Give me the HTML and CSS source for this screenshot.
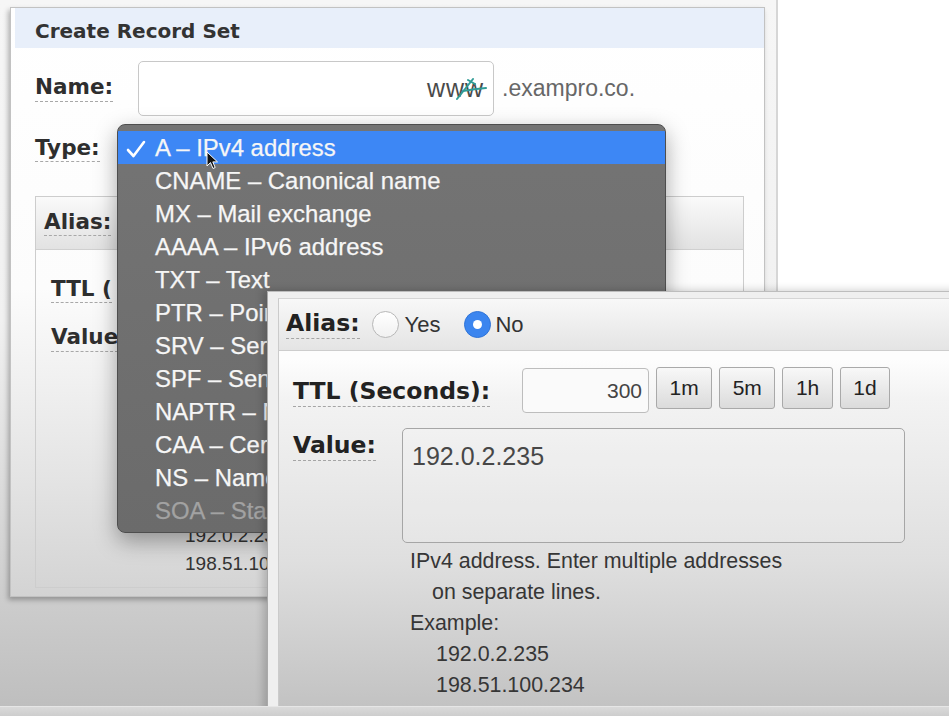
FILE: index.html
```html
<!DOCTYPE html>
<html lang="en">
<head>
<meta charset="utf-8">
<title>Create Record Set</title>
<link rel="stylesheet" href="styles.css">
</head>
<body>
<div class="stage">
  <div class="backdrop">
    <section class="window">
      <header class="win-head">Create Record Set</header>
      <div class="win-body">
        <div class="name-row">
          <span class="lbl">Name:</span>
          <div class="name-input">
            <span class="www">www</span>
            <svg class="scribble" width="34" height="26" viewBox="0 0 34 26"><path d="M1 22 L17 2" /><path d="M7 14 Q18 12 30 11" /><path d="M12 3 L19 7" /></svg>
          </div>
          <span class="domain">.exampro.co.</span>
        </div>
        <div class="type-row"><span class="lbl">Type:</span></div>
        <div class="alias-box">
          <div class="alias-head"><span class="lbl">Alias:</span></div>
          <div class="alias-body">
            <div class="b-ttl"><span class="lbl">TTL (</span></div>
            <div class="b-value">
              <div class="b-vcell"><span class="lbl">Value</span></div>
              <div class="b-field">
                <div class="b-help">
                  <p class="ex">192.0.2.235</p>
                  <p class="ex">198.51.100.234</p>
                </div>
              </div>
            </div>
          </div>
        </div>
      </div>
    </section>
    <div class="side"></div>
  </div>

  <ul class="menu">
    <li class="sel"><span class="check"><svg width="20" height="18" viewBox="0 0 20 18"><path d="M2 10 L7.5 16 L18 2" /></svg></span>A – IPv4 address</li>
    <li>CNAME – Canonical name</li>
    <li>MX – Mail exchange</li>
    <li>AAAA – IPv6 address</li>
    <li>TXT – Text</li>
    <li>PTR – Pointer</li>
    <li>SRV – Service locator</li>
    <li>SPF – Sender Policy Framework</li>
    <li>NAPTR – Name Authority Pointer</li>
    <li>CAA – Certification Authority Authorization</li>
    <li>NS – Name server</li>
    <li class="dis">SOA – Start of authority</li>
  </ul>

  <svg class="pointer" width="13" height="19" viewBox="0 0 13 19"><path d="M1 1 L1 15 L4.5 11.6 L7 17.5 L9.2 16.5 L6.8 10.9 L11.5 10.9 Z" /></svg>

  <section class="zoom">
    <div class="zpanel">
      <div class="zhead">
        <span class="zlbl">Alias:</span>
        <span class="radio"></span><span class="rtext">Yes</span>
        <span class="radio on"></span><span class="rtext no">No</span>
      </div>
      <div class="zbody">
        <div class="zttl">
          <div class="zttl-cell"><span class="zlbl">TTL (Seconds):</span></div>
          <div class="zinput">300</div>
          <button class="zbtn">1m</button>
          <button class="zbtn">5m</button>
          <button class="zbtn">1h</button>
          <button class="zbtn">1d</button>
        </div>
        <div class="zvalue">
          <div class="zvcell"><span class="zlbl">Value:</span></div>
          <div class="zfield">
            <div class="zta">192.0.2.235</div>
            <div class="zhelp">
              <p>IPv4 address. Enter multiple addresses</p>
              <p class="ind">on separate lines.</p>
              <p>Example:</p>
              <p class="ex">192.0.2.235</p>
              <p class="ex">198.51.100.234</p>
            </div>
          </div>
        </div>
      </div>
    </div>
  </section>

  <div class="bottom-bar"></div>
</div>
</body>
</html>
```

FILE: styles.css
```css
* { box-sizing: border-box; margin: 0; padding: 0; }
html, body { width: 949px; height: 716px; overflow: hidden; }
body { font-family: "Liberation Sans", Arial, sans-serif; background: #d0d0d0; }

.stage { position: relative; width: 949px; height: 716px; overflow: hidden; }

/* ---------- background screenshot ---------- */
.backdrop {
  display: flex; align-items: flex-start; height: 716px;
  background: linear-gradient(#f6f6f6 0, #f1f1f1 320px, #d2d2d2 560px, #bdbdbd 716px);
}
.window {
  margin: 7px 0 0 10px; width: 755px; height: 590px;
  border: 1px solid #c2c2c2; padding-left: 4px;
  background: linear-gradient(#fff 0, #fcfcfc 280px, #e4e4e4 470px, #d3d3d3 590px);
  box-shadow: -2px 3px 5px rgba(0,0,0,.28);
}
.win-head {
  height: 40px; background: #e8effa; padding: 6px 0 0 20px;
  font: bold 20px/34px "DejaVu Sans", Verdana, sans-serif; color: #333;
}
.win-body { padding: 13px 20px 0 20px; }

.lbl {
  display: inline-block; padding-bottom: 1px;
  font: bold 21.5px/1.15 "DejaVu Sans", Verdana, sans-serif; color: #2e2e2e;
  border-bottom: 1px dashed #a8a8a8;
}
.name-row { display: flex; align-items: center; height: 55px; }
.name-input {
  position: relative; margin-left: 25px; width: 356px; height: 55px;
  border: 1px solid #c8c8c8; border-radius: 5px; background: #fff;
  display: flex; align-items: center; justify-content: flex-end; padding-right: 9px;
}
.www { font-size: 25px; color: #4a4a4a; letter-spacing: 1px; }
.scribble { position: absolute; left: 317px; top: 15px; fill: none; stroke: #2f9b95; stroke-width: 2; stroke-linecap: round; }
.domain { margin-left: 8px; font-size: 23px; color: #676767; }
.type-row { display: flex; align-items: center; height: 30px; margin-top: 18px; }

.alias-box { margin-top: 32px; height: 392px; border: 1px solid #cdcdcd; }
.alias-head {
  height: 53px; display: flex; align-items: center; padding-left: 8px;
  background: linear-gradient(#fafafa, #e2e2e2); border-bottom: 1px solid #d0d0d0;
}
.alias-body { padding: 27px 0 0 15px; }
.b-ttl { height: 26px; display: flex; align-items: center; }
.b-value { display: flex; margin-top: 22px; }
.b-vcell { width: 112px; line-height: 26px; }
.b-help { margin-top: 197px; font-size: 19px; line-height: 28px; color: #333; }
.b-help .ex { padding-left: 22px; }

.side {
  flex: 1; align-self: stretch; margin-left: 11px;
  border-left: 2px solid #d6d6d6; background: #fff;
}

/* ---------- open select menu ---------- */
.menu {
  position: absolute; left: 117px; top: 124px; width: 549px; height: 409px;
  list-style: none; padding-top: 6px; overflow: hidden;
  background: linear-gradient(#747474, #6b6b6b);
  border: 1px solid #4e4e4e; border-radius: 8px;
  box-shadow: 0 8px 22px rgba(0,0,0,.35);
  font-size: 23.9px; color: #f6f6f6;
  -webkit-text-stroke: 0.25px #f6f6f6;
}
.menu li { height: 33px; line-height: 33px; padding-left: 37px; white-space: nowrap; }
.menu li.sel { background: #3d87f5; }
.menu li.dis { color: #a2a2a2; -webkit-text-stroke-color: #a2a2a2; }
.check { display: inline-block; width: 29px; margin-left: -29px; vertical-align: top; }
.check svg { vertical-align: -2px; fill: none; stroke: #fff; stroke-width: 2.6; stroke-linecap: round; stroke-linejoin: round; }

.pointer { position: absolute; left: 206px; top: 151px; fill: #111; stroke: #fff; stroke-width: 1; }

/* ---------- zoomed-in overlay ---------- */
.zoom {
  position: absolute; left: 267px; top: 291px; width: 700px; height: 440px;
  background: #efefef; border-left: 1px solid #a9a9a9; border-top: 1px solid #bdbdbd;
  padding: 6px 0 0 10px; box-shadow: -4px -1px 8px rgba(0,0,0,.18);
}
.zpanel {
  height: 100%; border-left: 1px solid #cbcbcb; border-top: 1px solid #d5d5d5;
  background: linear-gradient(#fdfdfd 60px, #f3f3f3 100px, #dfdfdf 262px, #c2c2c2 410px);
}
.zhead {
  height: 52px; display: flex; align-items: center; padding-left: 7px;
  background: linear-gradient(#f8f8f8, #e4e4e4); border-bottom: 1px solid #cdcdcd;
}
.zlbl {
  display: inline-block; padding-bottom: 1px;
  font: bold 23.5px/1.15 "DejaVu Sans", Verdana, sans-serif; color: #222;
  border-bottom: 1px dashed #a5a5a5;
}
.radio {
  width: 27px; height: 27px; border-radius: 50%; margin-left: 12px;
  border: 1px solid #b8b8b8; background: linear-gradient(#fff, #f1f1f1);
}
.radio.on {
  margin-left: 24px; background: #3b85ef; border-color: #2f74d8;
  display: flex; align-items: center; justify-content: center;
}
.radio.on::after { content: ""; width: 9px; height: 9px; border-radius: 50%; background: #fff; }
.rtext { font-size: 22px; color: #333; margin-left: 6px; }
.rtext.no { margin-left: 4px; }

.zbody { padding: 17px 0 0 14px; }
.zttl { display: flex; align-items: center; height: 45px; }
.zttl-cell { width: 229px; padding-top: 4px; }
.zinput {
  width: 127px; height: 45px; border: 1px solid #bdbdbd; border-radius: 4px;
  background: #fafafa; text-align: right; padding-right: 6px;
  font-size: 21px; line-height: 43px; color: #444;
}
.zbtn {
  align-self: flex-start; margin: -1px 0 0 7px; height: 42px; padding: 0 12.5px;
  border: 1px solid #a9a9a9; border-radius: 3px;
  background: linear-gradient(#f8f8f8, #dbdbdb);
  font: 21px "Liberation Sans", Arial, sans-serif; color: #222;
}
.zvalue { display: flex; margin-top: 15px; }
.zvcell { width: 109px; padding-top: 4px; }
.zta {
  width: 503px; height: 115px; border: 1px solid #a6a6a6; border-radius: 5px;
  padding: 9px 9px; font-size: 25px; line-height: 36px; color: #474747;
  background: rgba(255,255,255,.15);
}
.zhelp { margin-top: 3px; padding-left: 8px; font-size: 21.4px; line-height: 31px; color: #363636; }
.zhelp .ind { padding-left: 22px; }
.zhelp .ex { padding-left: 26px; }

.bottom-bar {
  position: absolute; left: 0; right: 0; bottom: 0; height: 10px;
  background: linear-gradient(#dadada, #cdcdcd); border-top: 1px solid #e6e6e6;
}
```
